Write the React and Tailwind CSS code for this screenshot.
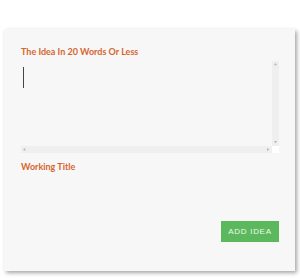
function Arrow({ dir }) {
  const points = {
    up: "0,3 2,0 4,3",
    down: "0,0 4,0 2,3",
    left: "3,0 3,4 0,2",
    right: "0,0 0,4 3,2",
  }[dir];
  return (
    <svg width="3" height="3" viewBox="0 0 4 4" className="block">
      <polygon points={points} fill="#b4b4b4" />
    </svg>
  );
}

export default function App() {
  return (
    <div className="min-h-[278px] bg-white pt-[29px] pl-[4px] font-['Lato',sans-serif]">
      <div className="flex h-[242px] w-[291px] flex-col bg-[#f7f7f7] pt-[17px] pl-[17px] pr-[16px] shadow-[2px_2px_4px_rgba(0,0,0,0.35)]">
        <label className="text-[9px] font-bold leading-[12px] text-[#d6652f]">
          The Idea In 20 Words Or Less
        </label>

        <div className="mt-[3px] flex w-[258px] flex-col">
          <div className="flex h-[85px]">
            <div className="relative flex-1">
              <textarea
                wrap="off"
                className="h-full w-full resize-none overflow-hidden border-0 bg-transparent pt-[5px] pl-[2px] text-[18px] leading-[22px] text-[#333] outline-none"
              />
              {/* text caret of the focused field */}
              <span className="absolute left-[2px] top-[6px] h-[21px] w-px bg-[#444]" />
            </div>
            <div className="flex w-[7px] flex-col items-center justify-between bg-[#efefef] py-[2px]">
              <Arrow dir="up" />
              <Arrow dir="down" />
            </div>
          </div>
          <div className="flex h-[7px]">
            <div className="flex flex-1 items-center justify-between bg-[#efefef] px-[2px]">
              <Arrow dir="left" />
              <Arrow dir="right" />
            </div>
            <div className="w-[7px] bg-white" />
          </div>
        </div>

        <label className="mt-[8px] text-[9px] font-bold leading-[12px] text-[#d6652f]">
          Working Title
        </label>
        <div className="mt-[48px] flex justify-end">
          <button className="h-[21px] w-[58px] bg-[#5cb85c] font-['Liberation_Sans',sans-serif] text-[8px] tracking-[0.7px] text-[#eef8ee]">
            ADD IDEA
          </button>
        </div>
      </div>
    </div>
  );
}
